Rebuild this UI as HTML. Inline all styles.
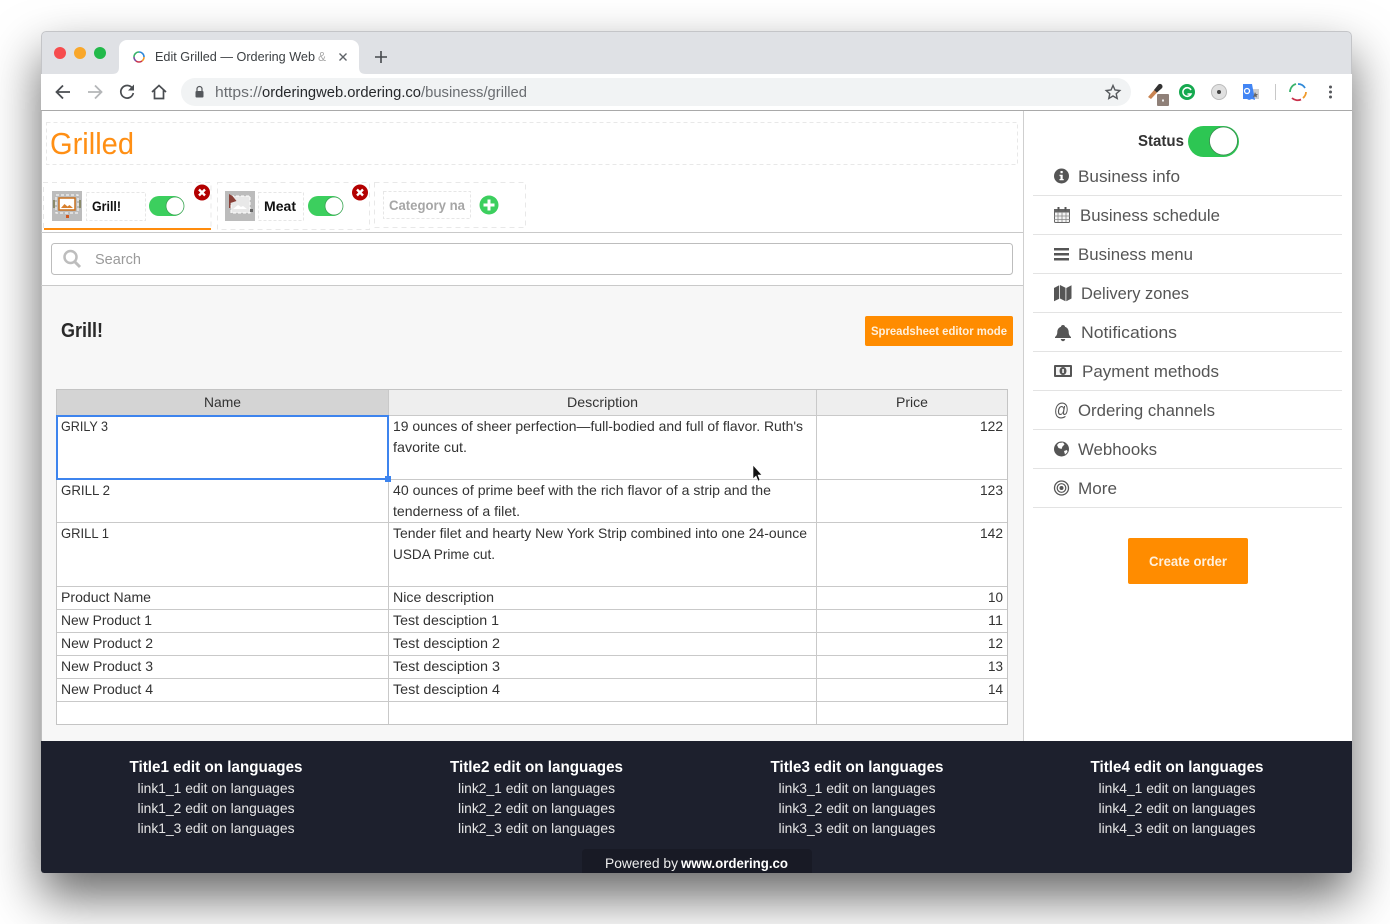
<!DOCTYPE html>
<html><head><meta charset="utf-8"><title>Edit Grilled</title>
<style>
html,body{margin:0;padding:0;width:1390px;height:924px;overflow:hidden;background:#fff}
#win{position:absolute;left:41px;top:31px;width:1311px;height:842px;border-radius:5px 5px 3px 3px;background:#fff;box-shadow:0 24px 50px 0 rgba(0,0,0,.6)}
svg{position:absolute;left:0;top:0}
text{font-family:"Liberation Sans",sans-serif;white-space:pre}
.t{font-size:14px;fill:#333}
.m{font-size:17px;fill:#555}
.ft{font-size:16px;font-weight:bold;fill:#fff;text-anchor:middle}
.fl{font-size:14px;fill:#e6e6e6;text-anchor:middle}
</style></head><body>
<div id="win"></div>
<svg width="1390" height="924" viewBox="0 0 1390 924" xmlns="http://www.w3.org/2000/svg">
<defs><clipPath id="w"><path d="M46 31H1347a5 5 0 0 1 5 5V870a3 3 0 0 1-3 3H44a3 3 0 0 1-3-3V36a5 5 0 0 1 5-5z"/></clipPath></defs>
<g clip-path="url(#w)">
<!-- chrome -->
<rect x="41" y="31" width="1311" height="43" fill="#dfe1e5"/>
<rect x="41" y="74" width="1311" height="36" fill="#fff"/>
<rect x="41" y="110" width="1311" height="1" fill="#a9a9a9"/>
<path d="M46 31.500H1347a4.500 4.500 0 0 1 4.500 4.500V74M41.500 74V36a4.500 4.500 0 0 1 4.500-4.500" fill="none" stroke="#c4c5c8"/>
<path d="M112 74c5 0 7-2 7-7V48a8 8 0 0 1 8-8H351a8 8 0 0 1 8 8V67c0 5 2 7 7 7z" fill="#fff"/>
<circle cx="60" cy="53" r="6" fill="#f64c4e"/><circle cx="80" cy="53" r="6" fill="#f9a72a"/><circle cx="100" cy="53" r="6" fill="#22b94a"/>
<!-- favicon -->
<g fill="none" stroke-width="1.6"><path d="M139 52a5 5 0 0 1 5 5" stroke="#2f88d8"/><path d="M144 57a5 5 0 0 1-2 4" stroke="#f09a2a"/><path d="M142 61a5 5 0 0 1-6 0" stroke="#c9304a"/><path d="M136 61a5 5 0 0 1-2-4" stroke="#7a4ea0"/><path d="M134 57a5 5 0 0 1 5-5" stroke="#39b36b"/></g>
<text x="155" y="61" font-size="12.5" fill="#3c4043" textLength="160" lengthAdjust="spacingAndGlyphs">Edit Grilled — Ordering Web</text>
<text x="318" y="61" font-size="12.5" fill="#aaa" textLength="8" lengthAdjust="spacingAndGlyphs">&amp;</text>
<path d="M339.500 53.500l7 7M346.500 53.500l-7 7" stroke="#5f6368" stroke-width="1.400"/>
<path d="M375 57h12M381 51v12" stroke="#45484c" stroke-width="1.600"/>
<!-- nav -->
<path d="M70 92H57M63 85.500l-6.500 6.500 6.500 6.500" fill="none" stroke="#4a4d51" stroke-width="1.800"/>
<path d="M88 92h13M95 85.500l6.500 6.500-6.500 6.500" fill="none" stroke="#b4b6b8" stroke-width="1.800"/>
<path d="M132.500 88.500a6.300 6.300 0 1 0 .8 4.500" fill="none" stroke="#4a4d51" stroke-width="1.700"/><path d="M134 84.500v6h-6z" fill="#4a4d51"/>
<path d="M152 92l7-6.500 7 6.500M154.500 90v8.500h9V90" fill="none" stroke="#4a4d51" stroke-width="1.700"/>
<rect x="181" y="78" width="950" height="28" rx="14" fill="#f1f3f4"/>
<rect x="195.500" y="91" width="8" height="6.500" rx="1" fill="#55585c"/><path d="M197 91v-2a2.500 2.500 0 0 1 5 0v2" fill="none" stroke="#55585c" stroke-width="1.200"/>
<text x="215" y="97" font-size="14.5" fill="#6a6d71" textLength="47" lengthAdjust="spacingAndGlyphs">https://</text>
<text x="262" y="97" font-size="14.5" fill="#26282b" textLength="159" lengthAdjust="spacingAndGlyphs">orderingweb.ordering.co</text>
<text x="421" y="97" font-size="14.5" fill="#6a6d71" textLength="106" lengthAdjust="spacingAndGlyphs">/business/grilled</text>
<path d="M1113 85.500l2 4.500 4.800.5-3.600 3.200 1 4.800-4.200-2.500-4.200 2.500 1-4.800-3.600-3.200 4.800-.5z" fill="none" stroke="#55585c" stroke-width="1.400"/>
<!-- extensions -->
<path d="M1148 97l7-8 3 2.500-7 7.500z" fill="#c98452"/><path d="M1154 90l4-5c1-1.500 3-1.500 4 0s.5 3-1 4l-4 3.500z" fill="#333"/>
<rect x="1157" y="94" width="12" height="12" rx="1" fill="#8f8078"/><rect x="1162" y="99.500" width="2" height="2" fill="#eee"/>
<circle cx="1187" cy="92" r="8" fill="#15a94f"/><path d="M1191 90a4.300 4.300 0 1 0 0 4h-3.500" fill="none" stroke="#fff" stroke-width="1.500"/>
<circle cx="1219" cy="92" r="7.500" fill="#e0e0e0" stroke="#bbb"/><circle cx="1219" cy="92" r="2" fill="#444"/>
<rect x="1251" y="89" width="8" height="10" fill="#cfcfcf"/><path d="M1243 84h9l3 16-3-1-3 1-2-1-4 0z" fill="#4285f4"/><circle cx="1247" cy="91" r="2.500" fill="none" stroke="#fff" stroke-width="1.300"/><path d="M1255 92l1 2h2l-1.500 1.500.5 2-2-1-2 1z" fill="#666"/>
<rect x="1275" y="84" width="1" height="16" fill="#c8c8c8"/>
<g fill="none" stroke-width="1.800"><path d="M1298 84a8 8 0 0 1 7 4" stroke="#2f88d8"/><path d="M1306 92a8 8 0 0 1-3 6" stroke="#f09a2a"/><path d="M1301 99.500a8 8 0 0 1-9-1.500" stroke="#c9304a"/><path d="M1290 92a8 8 0 0 1 1-4 8 8 0 0 1 5-4" stroke="#39b36b"/></g>
<circle cx="1330.500" cy="87" r="1.500" fill="#55585c"/><circle cx="1330.500" cy="92" r="1.500" fill="#55585c"/><circle cx="1330.500" cy="97" r="1.500" fill="#55585c"/>

<!-- content bg -->
<rect x="41" y="111" width="1311" height="630" fill="#fff"/>
<rect x="41" y="286" width="982" height="455" fill="#f7f7f7"/>
<rect x="41" y="111" width="1" height="630" fill="#bdbdbd"/>
<rect x="1023" y="111" width="1" height="630" fill="#cfcfcf"/>
<rect x="41" y="232" width="982" height="1" fill="#c9c9c9"/>
<rect x="41" y="285" width="982" height="1" fill="#c9c9c9"/>
<!-- title -->
<rect x="46.500" y="122.500" width="971" height="42" fill="none" stroke="#e8e8e8" stroke-dasharray="4 3"/>
<text x="50" y="154" font-size="31" fill="#ff8f14" textLength="84" lengthAdjust="spacingAndGlyphs">Grilled</text>
<!-- tabs -->
<g fill="none" stroke="#e8e8e8" stroke-dasharray="5 4">
<path d="M43.500 228V182.500H211V228"/><rect x="217.500" y="182.500" width="152" height="47"/><rect x="374.500" y="182.500" width="151" height="45"/>
</g>
<rect x="44" y="228" width="167" height="2" fill="#ff8c0d"/>
<rect x="52" y="191" width="30" height="30" fill="#bcbcbc"/>
<rect x="59" y="198" width="16" height="12" fill="#fff" stroke="#c8701e" stroke-width="1.500"/><path d="M61 208l3.500-4 3 2.500 2-1.500 3.500 3z" fill="#d9802c"/>
<rect x="56" y="195" width="22" height="18" fill="none" stroke="#fff" stroke-dasharray="3 2"/><rect x="66" y="215" width="3" height="3" fill="#d0561e"/>
<rect x="53" y="200" width="2" height="8" fill="#8a8a6a"/><rect x="79" y="200" width="2" height="8" fill="#8a8a6a"/>
<rect x="225" y="191" width="30" height="30" fill="#bcbcbc"/>
<rect x="231" y="196" width="19" height="17" fill="#e8e8e8" stroke="#fff" stroke-dasharray="3 2"/><path d="M229 194v14h1.500v-5l6-2-4-5z" fill="#8a4038"/><path d="M233 209l5-4 3 2 2-1 4 3z" fill="#fff"/><rect x="250" y="209" width="3" height="3" fill="#666"/>
<g fill="#fff" stroke="#e6e6e6" stroke-dasharray="3 2">
<rect x="86.500" y="192.500" width="59" height="28"/><rect x="258.500" y="192.500" width="45" height="28"/><rect x="383.500" y="191.500" width="87" height="27"/>
</g>
<text x="92" y="211" font-size="14" font-weight="bold" fill="#111" textLength="29" lengthAdjust="spacingAndGlyphs">Grill!</text>
<text x="264" y="211" font-size="14" font-weight="bold" fill="#111" textLength="32" lengthAdjust="spacingAndGlyphs">Meat</text>
<text x="389" y="210" font-size="14" font-weight="bold" fill="#a6a6a6" textLength="76" lengthAdjust="spacingAndGlyphs">Category na</text>
<rect x="149" y="196" width="35" height="20" rx="10" fill="#3ccf5e"/><circle cx="175" cy="206" r="9" fill="#fff" stroke="#39a552" stroke-width=".8"/>
<rect x="308" y="196" width="35" height="20" rx="10" fill="#3ccf5e"/><circle cx="334" cy="206" r="9" fill="#fff" stroke="#39a552" stroke-width=".8"/>
<circle cx="202" cy="192.500" r="8" fill="#b30000"/><path d="M199 189.500l6 6M205 189.500l-6 6" stroke="#fff" stroke-width="2.400"/>
<circle cx="360" cy="192.500" r="8" fill="#b30000"/><path d="M357 189.500l6 6M363 189.500l-6 6" stroke="#fff" stroke-width="2.400"/>
<circle cx="489" cy="205" r="9.500" fill="#3ccf5e"/><path d="M483.500 205h11M489 199.500v11" stroke="#fff" stroke-width="3"/>
<!-- search -->
<rect x="51.500" y="243.500" width="961" height="31" rx="3" fill="#fff" stroke="#bdbdbd"/>
<circle cx="70.500" cy="257" r="6" fill="none" stroke="#bdbdbd" stroke-width="2.500"/><path d="M75 262l5 5" stroke="#bdbdbd" stroke-width="3"/>
<text x="95" y="264" font-size="14.5" fill="#9a9a9a" textLength="46" lengthAdjust="spacingAndGlyphs">Search</text>
<!-- heading -->
<text x="61" y="337" font-size="20" font-weight="bold" fill="#2a2a2a" textLength="42" lengthAdjust="spacingAndGlyphs">Grill!</text>
<rect x="865" y="316" width="148" height="30" rx="2" fill="#ff8c00"/>
<text x="871" y="335" font-size="12" font-weight="bold" fill="#fff0dc" textLength="136" lengthAdjust="spacingAndGlyphs">Spreadsheet editor mode</text>
<!-- table -->
<rect x="56.500" y="389.500" width="951" height="335" fill="#fff" stroke="#c4c4c4"/>
<rect x="57" y="390" width="950" height="25" fill="#eeeeee"/><rect x="57" y="390" width="331" height="25" fill="#d4d4d4"/>
<g fill="#c9c9c9">
<rect x="57" y="415" width="950" height="1"/><rect x="57" y="479" width="950" height="1"/><rect x="57" y="522" width="950" height="1"/><rect x="57" y="586" width="950" height="1"/><rect x="57" y="609" width="950" height="1"/><rect x="57" y="632" width="950" height="1"/><rect x="57" y="655" width="950" height="1"/><rect x="57" y="678" width="950" height="1"/><rect x="57" y="701" width="950" height="1"/>
<rect x="388" y="390" width="1" height="334"/><rect x="816" y="390" width="1" height="334"/>
</g>
<text class="t" x="204" y="407" textLength="37" lengthAdjust="spacingAndGlyphs">Name</text>
<text class="t" x="567" y="407" textLength="71" lengthAdjust="spacingAndGlyphs">Description</text>
<text class="t" x="896" y="407" textLength="32" lengthAdjust="spacingAndGlyphs">Price</text>
<rect x="57" y="416" width="331" height="63" fill="none" stroke="#3d84ee" stroke-width="2"/>
<rect x="385" y="476" width="6" height="6" fill="#3d84ee"/>

<text class="t" x="61" y="431" textLength="47" lengthAdjust="spacingAndGlyphs">GRILY 3</text>
<text class="t" x="393" y="431" textLength="410" lengthAdjust="spacingAndGlyphs">19 ounces of sheer perfection—full-bodied and full of flavor. Ruth's</text>
<text class="t" x="393" y="452" textLength="74" lengthAdjust="spacingAndGlyphs">favorite cut.</text>
<text class="t" x="980" y="431" textLength="23" lengthAdjust="spacingAndGlyphs">122</text>
<text class="t" x="61" y="495" textLength="49" lengthAdjust="spacingAndGlyphs">GRILL 2</text>
<text class="t" x="393" y="495" textLength="378" lengthAdjust="spacingAndGlyphs">40 ounces of prime beef with the rich flavor of a strip and the</text>
<text class="t" x="393" y="516" textLength="127" lengthAdjust="spacingAndGlyphs">tenderness of a filet.</text>
<text class="t" x="980" y="495" textLength="23" lengthAdjust="spacingAndGlyphs">123</text>
<text class="t" x="61" y="538" textLength="48" lengthAdjust="spacingAndGlyphs">GRILL 1</text>
<text class="t" x="393" y="538" textLength="414" lengthAdjust="spacingAndGlyphs">Tender filet and hearty New York Strip combined into one 24-ounce</text>
<text class="t" x="393" y="559" textLength="102" lengthAdjust="spacingAndGlyphs">USDA Prime cut.</text>
<text class="t" x="980" y="538" textLength="23" lengthAdjust="spacingAndGlyphs">142</text>
<text class="t" x="61" y="602" textLength="90" lengthAdjust="spacingAndGlyphs">Product Name</text>
<text class="t" x="393" y="602" textLength="101" lengthAdjust="spacingAndGlyphs">Nice description</text>
<text class="t" x="988" y="602" textLength="15" lengthAdjust="spacingAndGlyphs">10</text>
<text class="t" x="61" y="625" textLength="91" lengthAdjust="spacingAndGlyphs">New Product 1</text>
<text class="t" x="393" y="625" textLength="106" lengthAdjust="spacingAndGlyphs">Test desciption 1</text>
<text class="t" x="988" y="625" textLength="15" lengthAdjust="spacingAndGlyphs">11</text>
<text class="t" x="61" y="648" textLength="92" lengthAdjust="spacingAndGlyphs">New Product 2</text>
<text class="t" x="393" y="648" textLength="107" lengthAdjust="spacingAndGlyphs">Test desciption 2</text>
<text class="t" x="988" y="648" textLength="15" lengthAdjust="spacingAndGlyphs">12</text>
<text class="t" x="61" y="671" textLength="92" lengthAdjust="spacingAndGlyphs">New Product 3</text>
<text class="t" x="393" y="671" textLength="107" lengthAdjust="spacingAndGlyphs">Test desciption 3</text>
<text class="t" x="988" y="671" textLength="15" lengthAdjust="spacingAndGlyphs">13</text>
<text class="t" x="61" y="694" textLength="92" lengthAdjust="spacingAndGlyphs">New Product 4</text>
<text class="t" x="393" y="694" textLength="107" lengthAdjust="spacingAndGlyphs">Test desciption 4</text>
<text class="t" x="988" y="694" textLength="15" lengthAdjust="spacingAndGlyphs">14</text>
<!-- cursor -->
<path d="M753 465v14l3-3 2 5 2-1-2-5h4z" fill="#111" stroke="#fff" stroke-width=".6"/>

<!-- sidebar -->
<text x="1138" y="146" font-size="16" font-weight="bold" fill="#333" textLength="46" lengthAdjust="spacingAndGlyphs">Status</text>
<rect x="1188" y="126" width="51" height="31" rx="15.500" fill="#2dc653"/><circle cx="1223.500" cy="141" r="14" fill="#fff" stroke="#3a8a50" stroke-width=".8"/>
<g fill="#e3e3e3"><rect x="1033" y="195" width="309" height="1"/><rect x="1033" y="234" width="309" height="1"/><rect x="1033" y="273" width="309" height="1"/><rect x="1033" y="312" width="309" height="1"/><rect x="1033" y="351" width="309" height="1"/><rect x="1033" y="390" width="309" height="1"/><rect x="1033" y="429" width="309" height="1"/><rect x="1033" y="468" width="309" height="1"/><rect x="1033" y="507" width="309" height="1"/></g>
<text class="m" x="1078" y="182" textLength="102" lengthAdjust="spacingAndGlyphs">Business info</text>
<text class="m" x="1080" y="221" textLength="140" lengthAdjust="spacingAndGlyphs">Business schedule</text>
<text class="m" x="1078" y="260" textLength="115" lengthAdjust="spacingAndGlyphs">Business menu</text>
<text class="m" x="1081" y="299" textLength="108" lengthAdjust="spacingAndGlyphs">Delivery zones</text>
<text class="m" x="1081" y="338" textLength="96" lengthAdjust="spacingAndGlyphs">Notifications</text>
<text class="m" x="1082" y="377" textLength="137" lengthAdjust="spacingAndGlyphs">Payment methods</text>
<text class="m" x="1078" y="416" textLength="137" lengthAdjust="spacingAndGlyphs">Ordering channels</text>
<text class="m" x="1078" y="455" textLength="79" lengthAdjust="spacingAndGlyphs">Webhooks</text>
<text class="m" x="1078" y="494" textLength="39" lengthAdjust="spacingAndGlyphs">More</text>
<!-- sidebar icons -->
<circle cx="1061.500" cy="176" r="7.500" fill="#555"/><rect x="1060.500" y="171" width="2.200" height="2.200" fill="#fff"/><path d="M1059.500 174.800h3.200v4.200h1v1.300h-4.200V179h1v-2.900h-1z" fill="#fff"/>
<rect x="1054.500" y="209.500" width="15" height="13" rx="1" fill="#f4f4f4" stroke="#666"/><rect x="1054" y="209" width="16" height="3.500" fill="#666"/><path d="M1058.500 207v3.500M1065.500 207v3.500" stroke="#555" stroke-width="2"/><path d="M1054 216h16M1054 219.500h16M1058 212v10M1062 212v10M1066 212v10" stroke="#888" stroke-width=".8"/>
<rect x="1054" y="248" width="15" height="2.500" fill="#555"/><rect x="1054" y="253" width="15" height="2.500" fill="#555"/><rect x="1054" y="258" width="15" height="2.500" fill="#555"/>
<path d="M1054 288l5.200-2.800v13.500l-5.200 2.500zM1060 285l5.500 2.800v13.500l-5.500-2.800zM1066.300 288l5.200-2.800v13.300l-5.200 2.800z" fill="#555"/>
<path d="M1063 325c1.200 0 2 .8 2 1.700 2.500.8 3.700 3 3.700 5.300 0 2.500 1 4 2.300 5v1h-16v-1c1.300-1 2.300-2.500 2.300-5 0-2.300 1.200-4.500 3.700-5.300 0-.9.800-1.700 2-1.700zM1060.800 339h4.400a2.200 2.200 0 0 1-4.400 0z" fill="#555"/>
<rect x="1054" y="365" width="18" height="12" rx="1" fill="#555"/><rect x="1056" y="367" width="14" height="8" fill="#f4f4f4"/><ellipse cx="1063" cy="371" rx="3.500" ry="4" fill="#555"/><rect x="1062.300" y="369" width="1.500" height="4" fill="#fff"/>
<text x="1054" y="416" font-size="18" fill="#555" textLength="15" lengthAdjust="spacingAndGlyphs">@</text>
<circle cx="1061.500" cy="449" r="7.500" fill="#555"/><path d="M1059 443l4-.5 1.500 2-2 2-1 2.500-3-1-1.500-3zM1064 451l3-1 .5 2-2.500 2.500z" fill="#fff"/>
<circle cx="1061.500" cy="488" r="7" fill="none" stroke="#555" stroke-width="1.300"/><circle cx="1061.500" cy="488" r="4.300" fill="none" stroke="#555" stroke-width="1.200"/><circle cx="1061.500" cy="488" r="2" fill="#555"/>
<rect x="1128" y="538" width="120" height="46" rx="2" fill="#ff8c00"/>
<text x="1149" y="566" font-size="14" font-weight="bold" fill="#fff0dc" textLength="78" lengthAdjust="spacingAndGlyphs">Create order</text>

<!-- footer -->
<rect x="41" y="741" width="1311" height="132" fill="#1d202d"/>
<path d="M582 873v-20a4 4 0 0 1 4-4H808a4 4 0 0 1 4 4v20z" fill="#181a25"/>
<text x="605" y="868" font-size="14" fill="#eee" textLength="73" lengthAdjust="spacingAndGlyphs">Powered by</text>
<text x="681" y="868" font-size="14" font-weight="bold" fill="#fff" textLength="107" lengthAdjust="spacingAndGlyphs">www.ordering.co</text>

<text class="ft" x="216" y="772" textLength="173" lengthAdjust="spacingAndGlyphs">Title1 edit on languages</text>
<text class="fl" x="216" y="793" textLength="157" lengthAdjust="spacingAndGlyphs">link1_1 edit on languages</text>
<text class="fl" x="216" y="813" textLength="157" lengthAdjust="spacingAndGlyphs">link1_2 edit on languages</text>
<text class="fl" x="216" y="833" textLength="157" lengthAdjust="spacingAndGlyphs">link1_3 edit on languages</text>
<text class="ft" x="536.500" y="772" textLength="173" lengthAdjust="spacingAndGlyphs">Title2 edit on languages</text>
<text class="fl" x="536.500" y="793" textLength="157" lengthAdjust="spacingAndGlyphs">link2_1 edit on languages</text>
<text class="fl" x="536.500" y="813" textLength="157" lengthAdjust="spacingAndGlyphs">link2_2 edit on languages</text>
<text class="fl" x="536.500" y="833" textLength="157" lengthAdjust="spacingAndGlyphs">link2_3 edit on languages</text>
<text class="ft" x="857" y="772" textLength="173" lengthAdjust="spacingAndGlyphs">Title3 edit on languages</text>
<text class="fl" x="857" y="793" textLength="157" lengthAdjust="spacingAndGlyphs">link3_1 edit on languages</text>
<text class="fl" x="857" y="813" textLength="157" lengthAdjust="spacingAndGlyphs">link3_2 edit on languages</text>
<text class="fl" x="857" y="833" textLength="157" lengthAdjust="spacingAndGlyphs">link3_3 edit on languages</text>
<text class="ft" x="1177" y="772" textLength="173" lengthAdjust="spacingAndGlyphs">Title4 edit on languages</text>
<text class="fl" x="1177" y="793" textLength="157" lengthAdjust="spacingAndGlyphs">link4_1 edit on languages</text>
<text class="fl" x="1177" y="813" textLength="157" lengthAdjust="spacingAndGlyphs">link4_2 edit on languages</text>
<text class="fl" x="1177" y="833" textLength="157" lengthAdjust="spacingAndGlyphs">link4_3 edit on languages</text>
</g>
</svg>
</body></html>
